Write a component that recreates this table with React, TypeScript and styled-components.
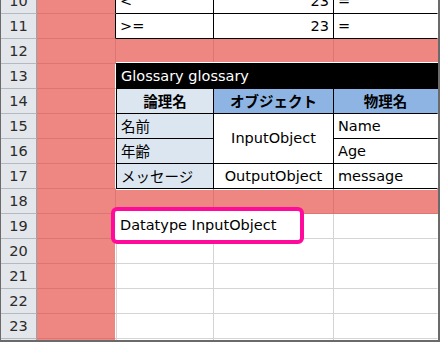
import React from 'react'
import styled, { createGlobalStyle } from 'styled-components'

const RED = '#ee8682'
const RED_LINE = '#dc7672'
const GRID = '#d4d4d4'
const PALE = '#dce6f1'
const BLUE = '#8db4e2'
const INK = '#000'
const WHITE = '#fff'

const GlobalStyle = createGlobalStyle`
  html, body {
    margin: 0;
    padding: 0;
    background: #fff;
  }
  body {
    font-family: 'DejaVu Sans', 'Noto Sans CJK JP', sans-serif;
  }
`

const Frame = styled.div`
  position: relative;
  width: 440px;
  height: 342px;
  box-sizing: border-box;
  border-left: 1px solid #6a6a6a;
  border-right: 2px solid #6a6a6a;
  border-bottom: 2px solid #6a6a6a;
  overflow: hidden;
  background: #fff;
`

// row 10 is scrolled half out of view
const Sheet = styled.div`
  display: grid;
  grid-template-columns: 36px 79px 98px 120px 1fr;
  grid-auto-rows: 25px;
  margin-top: -11px;
  font-size: 14.5px;
  color: #000;
`

const RowHead = styled.div`
  display: flex;
  align-items: center;
  justify-content: center;
  box-sizing: border-box;
  padding-bottom: 1px;
  background: #e3e6ea;
  border-right: 1px solid #9ba1a9;
  border-bottom: 1px solid #b4b9c0;
  color: #2b2b2b;
`

type CellProps = {
  $bg?: string
  $lb?: string
  $rb?: string
  $bb?: string
  $align?: 'left' | 'center' | 'right'
  $bold?: boolean
  $ink?: string
  $span?: number
  $rows?: number
  $edge?: boolean
}

const justify = { left: 'flex-start', center: 'center', right: 'flex-end' }

const Cell = styled.div<CellProps>`
  display: flex;
  align-items: center;
  justify-content: ${(p) => justify[p.$align ?? 'left']};
  box-sizing: border-box;
  min-width: 0;
  padding: 0 4px 1px;
  white-space: nowrap;
  background: ${(p) => p.$bg ?? WHITE};
  color: ${(p) => p.$ink ?? INK};
  font-weight: ${(p) => (p.$bold ? 700 : 400)};
  border-left: ${(p) => (p.$lb ? `1px solid ${p.$lb}` : 'none')};
  border-right: 1px solid ${(p) => p.$rb ?? 'transparent'};
  border-bottom: 1px solid ${(p) => p.$bb ?? GRID};
  grid-column: span ${(p) => p.$span ?? 1};
  grid-row: span ${(p) => p.$rows ?? 1};
  box-shadow: ${(p) => (p.$edge ? `inset 0 1px 0 ${WHITE}` : 'none')};
`

// black caption bar of the glossary block, with its white outline on top
const Caption = styled(Cell)`
  box-shadow: 0 -1px 0 ${INK}, 0 -2px 0 ${WHITE};
`

const Callout = styled.div`
  position: absolute;
  left: 110px;
  top: 207px;
  width: 193px;
  height: 37px;
  box-sizing: border-box;
  display: flex;
  align-items: center;
  padding: 0 0 1px 5px;
  border: 4px solid #ff0a9b;
  border-radius: 6px;
  background: #fff;
  font-size: 14.5px;
  white-space: nowrap;
`

const Margin = ({ rb = RED_LINE }: { rb?: string }) => (
  <Cell $bg={RED} $rb={rb} $bb={RED_LINE} />
)

const compare = [
  { row: 10, sign: '<', value: '23', op: '=' },
  { row: 11, sign: '>=', value: '23', op: '=' }
]

const terms = [
  { row: 15, label: '名前', object: 'InputObject', span: 2, name: 'Name' },
  { row: 16, label: '年齢', name: 'Age' },
  { row: 17, label: 'メッセージ', object: 'OutputObject', span: 1, name: 'message' }
]

export default function App() {
  return (
    <>
      <GlobalStyle />
      <Frame>
        <Sheet>
          {compare.map((r) => (
            <React.Fragment key={r.row}>
              <RowHead>{r.row}</RowHead>
              <Margin rb={INK} />
              <Cell $rb={INK} $bb={INK}>
                {r.sign}
              </Cell>
              <Cell $rb={INK} $bb={INK} $align="right">
                {r.value}
              </Cell>
              <Cell $bb={INK}>{r.op}</Cell>
            </React.Fragment>
          ))}

          <RowHead>12</RowHead>
          <Margin />
          <Cell $bg={RED} $rb={RED_LINE} $bb={RED_LINE} />
          <Cell $bg={RED} $rb={RED_LINE} $bb={RED_LINE} />
          <Cell $bg={RED} $bb={RED_LINE} />

          <RowHead>13</RowHead>
          <Margin rb={WHITE} />
          <Caption $span={3} $bg={INK} $ink={WHITE} $lb={INK} $bb={INK}>
            Glossary glossary
          </Caption>

          <RowHead>14</RowHead>
          <Margin rb={WHITE} />
          <Cell $bg={PALE} $lb={INK} $rb={INK} $bb={INK} $align="center" $bold>
            論理名
          </Cell>
          <Cell $bg={BLUE} $rb={INK} $bb={INK} $align="center" $bold>
            オブジェクト
          </Cell>
          <Cell $bg={BLUE} $bb={INK} $align="center" $bold>
            物理名
          </Cell>

          {terms.map((t) => (
            <React.Fragment key={t.row}>
              <RowHead>{t.row}</RowHead>
              <Margin rb={WHITE} />
              <Cell $bg={PALE} $lb={INK} $rb={INK} $bb={INK}>
                {t.label}
              </Cell>
              {t.object && (
                <Cell $rows={t.span} $rb={INK} $bb={INK} $align="center">
                  {t.object}
                </Cell>
              )}
              <Cell $bb={INK}>{t.name}</Cell>
            </React.Fragment>
          ))}

          <RowHead>18</RowHead>
          <Margin />
          <Cell $bg={RED} $rb={RED_LINE} $bb={RED_LINE} $edge />
          <Cell $bg={RED} $rb={RED_LINE} $bb={RED_LINE} $edge />
          <Cell $bg={RED} $bb={RED_LINE} $edge />

          {[19, 20, 21, 22, 23, 24].map((n) => (
            <React.Fragment key={n}>
              <RowHead>{n}</RowHead>
              <Margin rb={WHITE} />
              <Cell $lb={GRID} $rb={GRID} />
              <Cell $rb={GRID} />
              <Cell />
            </React.Fragment>
          ))}
        </Sheet>

        <Callout>Datatype InputObject</Callout>
      </Frame>
    </>
  )
}
